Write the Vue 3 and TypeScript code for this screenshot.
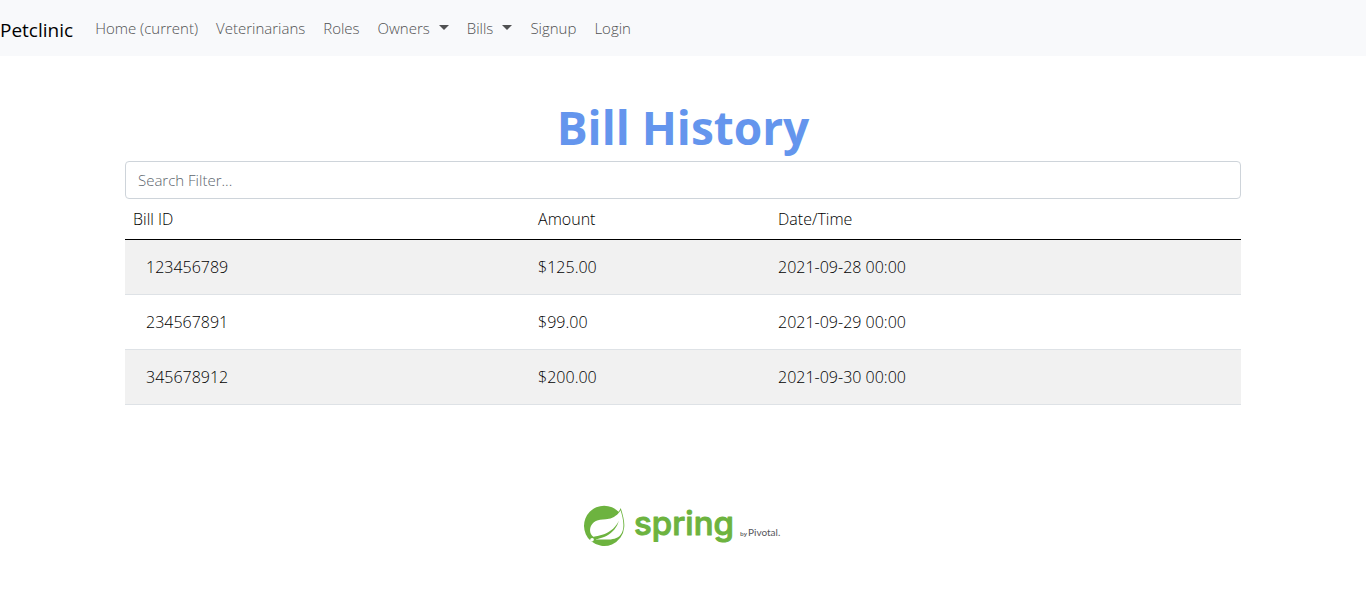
<script setup lang="ts">
import { computed, ref } from 'vue'

interface NavItem {
  label: string
  menu?: boolean
}

interface Bill {
  id: string
  amount: string
  date: string
}

const navItems: NavItem[] = [
  { label: 'Home (current)' },
  { label: 'Veterinarians' },
  { label: 'Roles' },
  { label: 'Owners', menu: true },
  { label: 'Bills', menu: true },
  { label: 'Signup' },
  { label: 'Login' },
]

const bills: Bill[] = [
  { id: '123456789', amount: '$125.00', date: '2021-09-28 00:00' },
  { id: '234567891', amount: '$99.00', date: '2021-09-29 00:00' },
  { id: '345678912', amount: '$200.00', date: '2021-09-30 00:00' },
]

const filter = ref('')

const visibleBills = computed(() => {
  const term = filter.value.trim().toLowerCase()
  return bills.filter((b) => `${b.id} ${b.amount} ${b.date}`.toLowerCase().includes(term))
})
</script>

<template>
  <nav class="navbar" aria-label="Main">
    <a class="brand" href="#">Petclinic</a>
    <ul class="nav-list">
      <li v-for="item in navItems" :key="item.label">
        <button v-if="item.menu" class="nav-link" type="button" aria-haspopup="true">
          {{ item.label }}<span class="caret"></span>
        </button>
        <a v-else class="nav-link" href="#">{{ item.label }}</a>
      </li>
    </ul>
  </nav>

  <main class="container">
    <h1 class="title">Bill History</h1>
    <input v-model="filter" class="search" type="text" placeholder="Search Filter..." aria-label="Search Filter" />
    <table class="bills">
      <colgroup>
        <col class="col-id" />
        <col class="col-amount" />
        <col />
      </colgroup>
      <thead>
        <tr>
          <th scope="col">Bill ID</th>
          <th scope="col">Amount</th>
          <th scope="col">Date/Time</th>
        </tr>
      </thead>
      <tbody>
        <tr v-for="bill in visibleBills" :key="bill.id">
          <td><button class="bill-button" type="button">{{ bill.id }}</button></td>
          <td>{{ bill.amount }}</td>
          <td>{{ bill.date }}</td>
        </tr>
      </tbody>
    </table>
  </main>

  <footer class="footer">
    <svg class="logo" viewBox="0 0 200 50" role="img" aria-label="Spring by Pivotal">
      <path
        fill="#6db33f"
        transform="translate(1 4.7) scale(1.68)"
        d="M21.8537 1.4158a10.4504 10.4504 0 0 1-1.284 2.2471A11.9666 11.9666 0 1 0 3.8518 20.7757l.4445.3951a11.9543 11.9543 0 0 0 19.6316-8.2971c.3457-3.0126-.568-6.8649-2.0742-11.458zM5.5805 20.8745a1.0174 1.0174 0 1 1-.1482-1.4323 1.0396 1.0396 0 0 1 .1482 1.4323zm16.1991-3.5806c-2.9385 3.9263-9.2601 2.5928-13.2852 2.7904 0 0-.7161.0494-1.4323.1481 0 0 .2717-.1234.6174-.2469 2.8398-.9877 4.1732-1.1853 5.9018-2.0743 3.2349-1.6545 6.4698-5.2844 7.1118-9.0379-1.2347 3.6053-4.9881 6.7167-8.3959 7.9761-2.3459.8643-6.5685 1.7039-6.5685 1.7039l-.1729-.0988c-2.8645-1.4076-2.9632-7.6304 2.2718-9.6306 2.2966-.889 4.4696-.395 6.9637-.9877 2.6422-.6174 5.7043-2.5927 6.939-5.1857 1.3828 4.1732 3.062 10.643.0493 14.6434z"
      />
      <text class="wordmark" x="51" y="34">spring</text>
      <text class="byline" x="157" y="35">by</text>
      <text class="pivotal" x="165" y="35">Pivotal.</text>
    </svg>
  </footer>
</template>

<style>
body {
  margin: 0;
  background: #fff;
}
</style>

<style scoped>
.navbar,
.container,
.footer {
  font-family: "Open Sans", "Noto Sans", sans-serif;
  font-size: 16px;
  font-weight: 300;
  line-height: 24px;
  color: #000;
}

.navbar {
  display: flex;
  align-items: center;
  padding: 8px 0;
  background: #f8f9fb;
}

.brand {
  margin-right: 13px;
  padding: 7px 0 3px;
  font-size: 19px;
  font-weight: 400;
  line-height: 30px;
  color: #000;
  text-decoration: none;
}

.nav-list {
  display: flex;
  margin: 0;
  padding: 0;
  list-style: none;
  font-size: 15px;
}

.nav-link {
  display: block;
  padding: 8px 9px;
  border: 0;
  background: none;
  font: inherit;
  color: #505152;
  text-decoration: none;
  white-space: nowrap;
  cursor: pointer;
}

.caret {
  display: inline-block;
  margin-left: 9px;
  vertical-align: 4px;
  border-top: 5px solid;
  border-right: 5px solid transparent;
  border-left: 5px solid transparent;
}

.container {
  box-sizing: border-box;
  max-width: 1140px;
  margin: 0 auto;
  padding: 42px 12px 0;
}

.title {
  margin: 0 0 5px;
  font-size: 46px;
  font-weight: 700;
  line-height: 58px;
  text-align: center;
  color: #6495ed;
}

.search {
  display: block;
  box-sizing: border-box;
  width: 100%;
  padding: 6px 12px;
  border: 1px solid #ced4da;
  border-radius: 4px;
  background: #fff;
  font: inherit;
  font-size: 15px;
  color: #212529;
}

.search::placeholder {
  color: #5c656d;
  opacity: 1;
}

.bills {
  width: 100%;
  border-collapse: collapse;
  table-layout: fixed;
}

.col-id {
  width: 36.3%;
}

.col-amount {
  width: 21.5%;
}

.bills th,
.bills td {
  padding: 8px;
  border-bottom: 1px solid #dee2e6;
  text-align: left;
}

.bills th {
  border-bottom-color: #000;
  font-weight: 300;
}

.bills tbody tr:nth-child(odd) {
  background: #f1f1f1;
}

.bill-button {
  display: block;
  padding: 6px 12px;
  border: 1px solid transparent;
  background: none;
  font: inherit;
  color: inherit;
  cursor: pointer;
}

.footer {
  padding: 96px 12px 40px;
}

.logo {
  display: block;
  width: 200px;
  height: 50px;
  margin: 0 auto;
}

.wordmark {
  font-family: Inter, sans-serif;
  font-size: 33px;
  font-weight: 500;
  fill: #6db33f;
  stroke: #6db33f;
  stroke-width: 1px;
  stroke-linejoin: round;
}

.byline {
  font-size: 6px;
  font-weight: 600;
  fill: #555;
}

.pivotal {
  font-family: Lato, sans-serif;
  font-size: 10px;
  font-weight: 400;
  fill: #55565a;
}
</style>
